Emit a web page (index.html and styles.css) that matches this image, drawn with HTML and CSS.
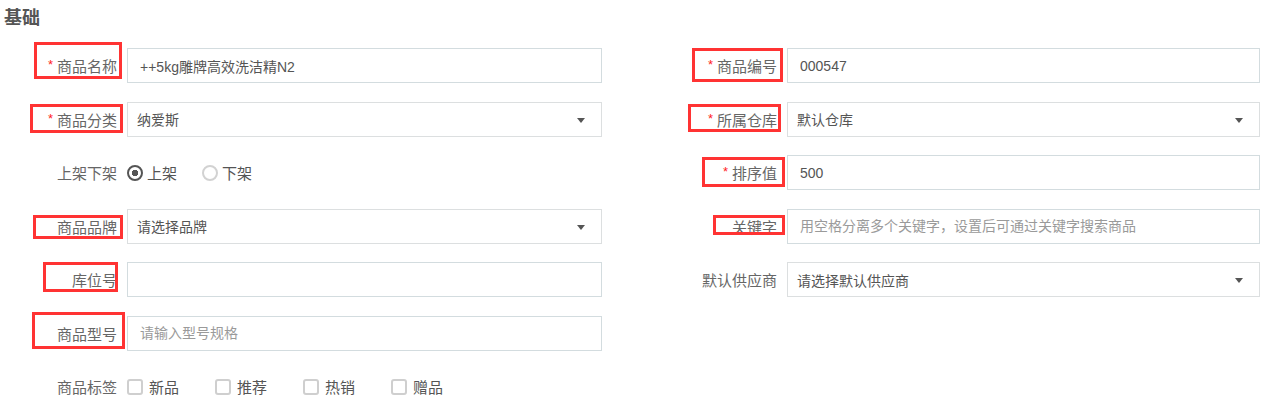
FILE: index.html
```html
<!DOCTYPE html>
<html lang="zh-CN">
<head>
  <meta charset="UTF-8" />
  <title>商品编辑 - 基础</title>
  <link rel="stylesheet" href="styles.css">
</head>
<body>
  <h3 class="title">基础</h3>
  <div class="form">
    <div class="field">
      <label class="lbl m1"><i>*</i>商品名称</label>
      <input class="ipt" type="text" value="++5kg雕牌高效洗洁精N2">
    </div>
    <div class="field">
      <label class="lbl m6"><i>*</i>商品编号</label>
      <input class="ipt" type="text" value="000547">
    </div>

    <div class="field">
      <label class="lbl m2"><i>*</i>商品分类</label>
      <div class="sel">纳爱斯</div>
    </div>
    <div class="field">
      <label class="lbl m7"><i>*</i>所属仓库</label>
      <div class="sel">默认仓库</div>
    </div>

    <div class="field">
      <label class="lbl">上架下架</label>
      <div class="opts">
        <span class="radio on">上架</span>
        <span class="radio">下架</span>
      </div>
    </div>
    <div class="field">
      <label class="lbl m8"><i>*</i>排序值</label>
      <input class="ipt" type="text" value="500">
    </div>

    <div class="field">
      <label class="lbl m3">商品品牌</label>
      <div class="sel">请选择品牌</div>
    </div>
    <div class="field">
      <label class="lbl m9">关键字</label>
      <input class="ipt" type="text" placeholder="用空格分离多个关键字，设置后可通过关键字搜索商品">
    </div>

    <div class="field">
      <label class="lbl m4">库位号</label>
      <input class="ipt" type="text">
    </div>
    <div class="field">
      <label class="lbl">默认供应商</label>
      <div class="sel">请选择默认供应商</div>
    </div>

    <div class="field col-l">
      <label class="lbl m5">商品型号</label>
      <input class="ipt" type="text" placeholder="请输入型号规格">
    </div>

    <div class="field col-l">
      <label class="lbl">商品标签</label>
      <div class="opts">
        <span class="chk">新品</span>
        <span class="chk">推荐</span>
        <span class="chk">热销</span>
        <span class="chk">赠品</span>
      </div>
    </div>
  </div>
</body>
</html>
```

FILE: styles.css
```css
body {
  margin: 0;
  font-family: "Liberation Sans", "Noto Sans CJK SC", sans-serif;
  color: #555;
  background: #fff;
}
.title {
  margin: 0;
  padding: 6px 0 0 4px;
  font-size: 18px;
  line-height: 24px;
  font-weight: bold;
  color: #555;
}
.form {
  display: grid;
  grid-template-columns: 602px 600px;
  grid-auto-rows: 35px;
  column-gap: 58px;
  row-gap: 18.5px;
  margin-top: 18px;
}
.field {
  display: grid;
  grid-template-columns: 117px 1fr;
  column-gap: 10px;
  align-items: center;
}
.col-l {
  grid-column: 1;
}
.lbl {
  position: relative;
  align-self: stretch;
  display: flex;
  align-items: center;
  justify-content: flex-end;
  font-size: 15px;
  color: #666;
}
.lbl i {
  font-style: normal;
  color: #f22;
  font-size: 13px;
  margin-right: 4px;
  position: relative;
  top: -1px;
}
.ipt, .sel {
  box-sizing: border-box;
  height: 35px;
  width: 100%;
  border: 1px solid #d3dcdf;
  background: #fff;
  font-family: inherit;
  font-size: 14px;
  color: #555;
  padding: 0 12px;
  outline: none;
}
.ipt::placeholder {
  color: #9a9a9a;
}
.sel {
  position: relative;
  display: flex;
  align-items: center;
  padding: 0 9px;
  border-color: #dcdfe0;
}
.sel::after {
  content: "";
  position: absolute;
  right: 16px;
  top: 15px;
  border-left: 4px solid transparent;
  border-right: 4px solid transparent;
  border-top: 5px solid #555;
}
.opts {
  display: flex;
  align-items: center;
  font-size: 15px;
  color: #555;
}
.radio, .chk {
  display: flex;
  align-items: center;
}
.radio::before {
  content: "";
  box-sizing: border-box;
  width: 16px;
  height: 16px;
  border-radius: 50%;
  border: 2px solid #d2d2d2;
  margin-right: 4px;
}
.radio.on::before {
  border: 2px solid #555;
  background: radial-gradient(circle, #555 0 3px, #fff 3.5px);
}
.radio + .radio {
  margin-left: 25px;
}
.chk::before {
  content: "";
  box-sizing: border-box;
  width: 16px;
  height: 16px;
  border: 2px solid #cfcfcf;
  border-radius: 3px;
  margin-right: 6px;
}
.chk {
  width: 88px;
}

/* red review boxes around labels */
.lbl[class*=" m"]::after {
  content: "";
  position: absolute;
  border: 3px solid #f33;
}
.m1::after { top: -6px; bottom: 4px; left: 34px; right: -5px; }
.m2::after { top: 2px; bottom: 4px; left: 30px; right: -6px; }
.m3::after { top: 6px; bottom: 5px; left: 33px; right: -6px; }
.m4::after { top: 0; bottom: 5px; left: 43px; right: -1px; }
.m5::after { top: -4px; bottom: 2px; left: 32px; right: -8px; }
.m6::after { top: 0; bottom: 1px; left: 32px; right: -6px; }
.m7::after { top: 2px; bottom: 5px; left: 28px; right: -4px; }
.m8::after { top: 2px; bottom: 3px; left: 42px; right: -8px; }
.m9::after { top: 6px; bottom: 9px; left: 53px; right: -8px; }
```
